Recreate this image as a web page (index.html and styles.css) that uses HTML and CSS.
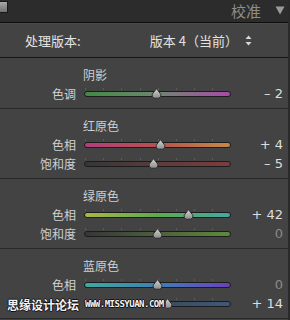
FILE: index.html
```html
<!DOCTYPE html>
<html>
<head>
<meta charset="utf-8">
<link rel="stylesheet" href="styles.css">
</head>
<body>
<div class="panel">
  <div class="header">
    <div class="grip"></div>
    <div class="title">校准</div>
    <svg class="tri" width="10" height="9" viewBox="0 0 10 9"><path d="M0.5 0.5 H9.5 L5 8.5 Z" fill="#9a9a9a"/></svg>
  </div>
  <div class="process">
    <div class="plabel">处理版本:</div>
    <div class="pvalue">版本 4（当前）<svg class="updown" width="7" height="11" viewBox="0 0 7 11"><path d="M3.5 0.5 L6.5 4 H0.5 Z M3.5 10.5 L6.5 7 H0.5 Z" fill="#d8d8d8"/></svg></div>
  </div>

  <div class="section">
    <div class="stitle">阴影</div>
    <div class="row">
      <div class="label">色调</div>
      <div class="slider"><div class="track t-tone"></div><svg class="thumb" style="left:49%" width="11" height="11" viewBox="0 0 11 11"><path d="M5.5 0.6 L9.8 6.2 Q10.6 9.8 7.5 10.2 H3.5 Q0.4 9.8 1.2 6.2 Z" fill="url(#g)" stroke="#262626" stroke-width="0.9"/></svg></div>
      <div class="value">– 2</div>
    </div>
  </div>

  <div class="section">
    <div class="stitle">红原色</div>
    <div class="row">
      <div class="label">色相</div>
      <div class="slider"><div class="track t-rh"></div><svg class="thumb" style="left:52%" width="11" height="11" viewBox="0 0 11 11"><path d="M5.5 0.6 L9.8 6.2 Q10.6 9.8 7.5 10.2 H3.5 Q0.4 9.8 1.2 6.2 Z" fill="url(#g)" stroke="#262626" stroke-width="0.9"/></svg></div>
      <div class="value">+ 4</div>
    </div>
    <div class="row">
      <div class="label">饱和度</div>
      <div class="slider"><div class="track t-rs"></div><svg class="thumb" style="left:47.5%" width="11" height="11" viewBox="0 0 11 11"><path d="M5.5 0.6 L9.8 6.2 Q10.6 9.8 7.5 10.2 H3.5 Q0.4 9.8 1.2 6.2 Z" fill="url(#g)" stroke="#262626" stroke-width="0.9"/></svg></div>
      <div class="value">– 5</div>
    </div>
  </div>

  <div class="section">
    <div class="stitle">绿原色</div>
    <div class="row">
      <div class="label">色相</div>
      <div class="slider"><div class="track t-gh"></div><svg class="thumb" style="left:71%" width="11" height="11" viewBox="0 0 11 11"><path d="M5.5 0.6 L9.8 6.2 Q10.6 9.8 7.5 10.2 H3.5 Q0.4 9.8 1.2 6.2 Z" fill="url(#g)" stroke="#262626" stroke-width="0.9"/></svg></div>
      <div class="value">+ 42</div>
    </div>
    <div class="row">
      <div class="label">饱和度</div>
      <div class="slider"><div class="track t-gs"></div><svg class="thumb" style="left:50%" width="11" height="11" viewBox="0 0 11 11"><path d="M5.5 0.6 L9.8 6.2 Q10.6 9.8 7.5 10.2 H3.5 Q0.4 9.8 1.2 6.2 Z" fill="url(#g)" stroke="#262626" stroke-width="0.9"/></svg></div>
      <div class="value zero">0</div>
    </div>
  </div>

  <div class="section">
    <div class="stitle">蓝原色</div>
    <div class="row">
      <div class="label">色相</div>
      <div class="slider"><div class="track t-bh"></div><svg class="thumb" style="left:50%" width="11" height="11" viewBox="0 0 11 11"><path d="M5.5 0.6 L9.8 6.2 Q10.6 9.8 7.5 10.2 H3.5 Q0.4 9.8 1.2 6.2 Z" fill="url(#g)" stroke="#262626" stroke-width="0.9"/></svg></div>
      <div class="value zero">0</div>
    </div>
    <div class="row">
      <div class="label">饱和度</div>
      <div class="slider"><div class="track t-bs"></div><svg class="thumb" style="left:57%" width="11" height="11" viewBox="0 0 11 11"><path d="M5.5 0.6 L9.8 6.2 Q10.6 9.8 7.5 10.2 H3.5 Q0.4 9.8 1.2 6.2 Z" fill="url(#g)" stroke="#262626" stroke-width="0.9"/></svg></div>
      <div class="value">+ 14</div>
    </div>
  </div>

  <div class="watermark"><span class="wm-cn">思缘设计论坛</span><span class="wm-en">WWW.MISSYUAN.COM</span></div>
</div>
<svg width="0" height="0" class="defs"><defs><linearGradient id="g" x1="0" y1="0" x2="0" y2="1"><stop offset="0" stop-color="#d4d4d4"/><stop offset="1" stop-color="#8c8c8c"/></linearGradient></defs></svg>
</body>
</html>
```
FILE: styles.css
```css
html, body {
  margin: 0;
  padding: 0;
  background: #434343;
}
body {
  width: 290px;
  height: 320px;
  overflow: hidden;
  font-family: "Noto Sans CJK SC", "Noto Sans", sans-serif;
}
.defs { position: absolute; }
.panel {
  position: relative;
  width: 288px;
  height: 320px;
  background: #434343;
  border-right: 2px solid #2a2a2a;
}
.header {
  height: 22px;
  background: #2c2c2c;
  border-bottom: 1px solid #0e0e0e;
  display: flex;
  align-items: center;
  box-sizing: content-box;
}
.grip {
  width: 7px;
  height: 10px;
  margin-top: -8px;
  background: linear-gradient(#a8a8a8, #707070);
  border: 1px solid #1a1a1a;
  border-left: none;
}
.title {
  margin-left: auto;
  font-size: 15px;
  line-height: 22px;
  color: #8e8e8e;
  margin-right: 14px;
}
.tri {
  margin-right: 3px;
  margin-top: -2px;
}
.process {
  height: 34px;
  border-bottom: 1px solid #161616;
  display: flex;
  align-items: center;
  padding-left: 25px;
  color: #e2e2e2;
  font-size: 13px;
  box-shadow: inset 0 1px 0 #4a4a4a;
}
.pvalue {
  margin-left: auto;
  margin-right: 36px;
  display: flex;
  align-items: center;
}
.updown { margin-left: 7px; }
.section {
  padding: 8px 0 5px;
  border-bottom: 1px solid #2a2a2a;
}
.stitle {
  height: 18px;
  line-height: 18px;
  padding-left: 83px;
  font-size: 12px;
  color: #cfcfcf;
}
.row {
  height: 19px;
  display: grid;
  grid-template-columns: 76px 147px 44px;
  column-gap: 8px;
  align-items: center;
}
.label {
  text-align: right;
  font-size: 12px;
  color: #cfcfcf;
  line-height: 19px;
}
.slider {
  position: relative;
  height: 19px;
}
.slider::before {
  content: "";
  position: absolute;
  left: 1px;
  right: 1px;
  top: 4px;
  height: 2px;
  background: repeating-linear-gradient(90deg, #5c5c5c 0 1px, transparent 1px 18.2px);
}
.track {
  position: absolute;
  left: 0;
  right: 0;
  top: 7px;
  height: 4px;
  border: 1px solid #1c1c1c;
  border-radius: 3px;
}
.thumb {
  position: absolute;
  top: 4px;
  margin-left: -5.5px;
}
.value {
  text-align: right;
  font-family: "DejaVu Sans", sans-serif;
  font-size: 13px;
  color: #dedede;
  line-height: 19px;
}
.value.zero { color: #8a8a8a; }
.t-tone { background: linear-gradient(90deg, #3f8a44, #6f8670 50%, #a84aa8); }
.t-rh { background: linear-gradient(90deg, #b0407a, #b8504e 50%, #c28a48); }
.t-rs { background: linear-gradient(90deg, #363636, #5a3c3c 50%, #7e3c3c); }
.t-gh { background: linear-gradient(90deg, #a8b844, #5eaa4e 50%, #42a8a4); }
.t-gs { background: linear-gradient(90deg, #363636, #4c603c 50%, #5e8a3a); }
.t-bh { background: linear-gradient(90deg, #3ea8a2, #3e80b4 50%, #6a40bc); }
.t-bs { background: linear-gradient(90deg, #363636, #384a5a 50%, #3c5a7c); }
.watermark {
  position: absolute;
  left: 5px;
  top: 295px;
  padding: 0 2px;
  display: flex;
  align-items: center;
  background: #434343;
  color: #f2f2f2;
  text-shadow: -1px 0 #111, 1px 0 #111, 0 -1px #111, 0 1px #111;
}
.wm-cn {
  font-size: 12px;
  font-weight: bold;
  line-height: 19px;
}
.wm-en {
  margin-left: 6px;
  font-family: "DejaVu Sans Mono", monospace;
  font-size: 9px;
  font-weight: bold;
  letter-spacing: -0.5px;
  line-height: 19px;
}
```
